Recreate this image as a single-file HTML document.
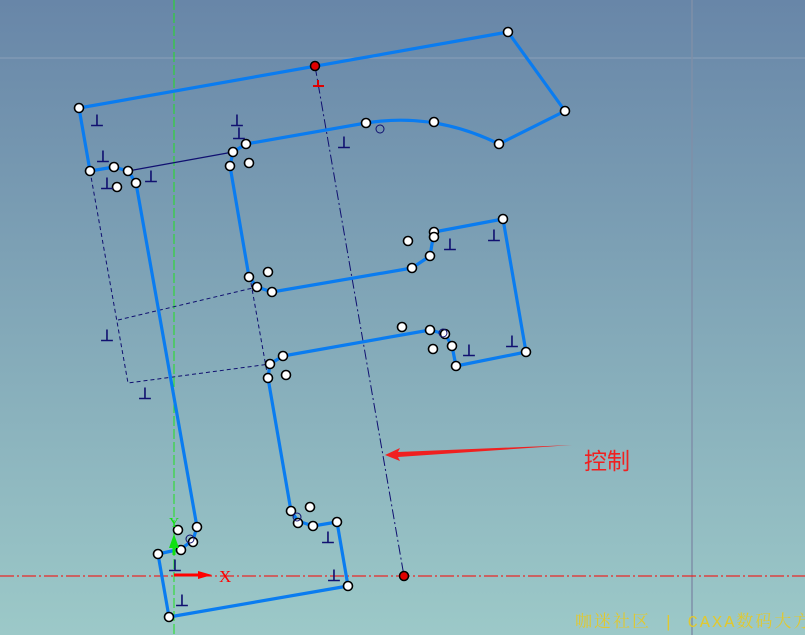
<!DOCTYPE html><html><head><meta charset="utf-8"><style>
html,body{margin:0;padding:0;width:805px;height:635px;overflow:hidden}
body{background:linear-gradient(#6886a8,#9cc9c8)}
svg{position:absolute;left:0;top:0}
</style></head><body>
<svg width="805" height="635" viewBox="0 0 805 635" font-family="Liberation Serif, serif">
<line x1="0" y1="58" x2="805" y2="58" stroke="#8aa0b8" stroke-width="1"/>
<line x1="692" y1="0" x2="692" y2="635" stroke="#7f8fa8" stroke-width="1.5"/>
<line x1="174" y1="0" x2="174" y2="635" stroke="#20e020" stroke-width="1" stroke-dasharray="10,3"/>
<line x1="0" y1="576" x2="805" y2="576" stroke="#ff0000" stroke-width="1" stroke-dasharray="14,3,2,3"/>
<line x1="315" y1="66" x2="404" y2="576" stroke="#101070" stroke-width="1" stroke-dasharray="10,3,2,3"/>
<g stroke="#101070" stroke-width="1" fill="none" stroke-dasharray="4,3">
<polyline points="90,171 128,383 270,364"/>
<line x1="118" y1="320" x2="257" y2="287"/>
<line x1="230" y1="166" x2="268" y2="378"/>
<line x1="246" y1="144" x2="366" y2="123"/>
</g>
<line x1="128" y1="171" x2="233" y2="152" stroke="#101070" stroke-width="1.2"/>
<g stroke="#0a7cf0" stroke-width="3.2" fill="none" stroke-linejoin="round">
<polyline points="366,123 246,144 233,152 230,166 249,277 257,287 272,292 412,268 430,256 434,232 503,219 526,352 456,366 452,346 445,334 430,330 283,356 270,364 268,378 291,511 298,521 313,526 337,522 348,586 169,617 158,554 181,549 193,540 197,527 136,183 128,171 114,167 90,171 79,108 508,32 565,111 499,144"/>
<path d="M499,144 Q434,112 366,123"/>
</g>
<g fill="#fff" stroke="#000" stroke-width="1.6">
<circle cx="79" cy="108" r="4.5"/><circle cx="508" cy="32" r="4.5"/><circle cx="565" cy="111" r="4.5"/><circle cx="499" cy="144" r="4.5"/><circle cx="434" cy="122" r="4.5"/><circle cx="366" cy="123" r="4.5"/><circle cx="246" cy="144" r="4.5"/><circle cx="233" cy="152" r="4.5"/><circle cx="230" cy="166" r="4.5"/><circle cx="249" cy="163" r="4.5"/><circle cx="90" cy="171" r="4.5"/><circle cx="114" cy="167" r="4.5"/><circle cx="128" cy="171" r="4.5"/><circle cx="117" cy="187" r="4.5"/><circle cx="136" cy="183" r="4.5"/><circle cx="249" cy="277" r="4.5"/><circle cx="268" cy="272" r="4.5"/><circle cx="257" cy="287" r="4.5"/><circle cx="272" cy="292" r="4.5"/><circle cx="412" cy="268" r="4.5"/><circle cx="430" cy="256" r="4.5"/><circle cx="434" cy="232" r="4.5"/><circle cx="434" cy="237" r="4.5"/><circle cx="408" cy="241" r="4.5"/><circle cx="503" cy="219" r="4.5"/><circle cx="526" cy="352" r="4.5"/><circle cx="456" cy="366" r="4.5"/><circle cx="452" cy="346" r="4.5"/><circle cx="433" cy="349" r="4.5"/><circle cx="445" cy="334" r="4.5"/><circle cx="430" cy="330" r="4.5"/><circle cx="402" cy="327" r="4.5"/><circle cx="283" cy="356" r="4.5"/><circle cx="270" cy="364" r="4.5"/><circle cx="268" cy="378" r="4.5"/><circle cx="286" cy="375" r="4.5"/><circle cx="291" cy="511" r="4.5"/><circle cx="310" cy="507" r="4.5"/><circle cx="298" cy="523" r="4.5"/><circle cx="313" cy="526" r="4.5"/><circle cx="337" cy="522" r="4.5"/><circle cx="348" cy="586" r="4.5"/><circle cx="169" cy="617" r="4.5"/><circle cx="158" cy="554" r="4.5"/><circle cx="181" cy="550" r="4.5"/><circle cx="193" cy="542" r="4.5"/><circle cx="197" cy="527" r="4.5"/><circle cx="178" cy="530" r="4.5"/>
</g>
<circle cx="315" cy="66" r="4.5" fill="#e00000" stroke="#000" stroke-width="1.5"/>
<circle cx="404" cy="576" r="4.5" fill="#e00000" stroke="#000" stroke-width="1.5"/>
<line x1="313" y1="86" x2="324" y2="86" stroke="#e00000" stroke-width="2"/>
<line x1="318" y1="80" x2="318" y2="86" stroke="#e00000" stroke-width="2"/>
<g fill="#101070" font-size="16" font-family="Liberation Sans, sans-serif" font-weight="bold">
<text x="90" y="126">⊥</text><text x="230" y="126">⊥</text><text x="232" y="139">⊥</text><text x="96" y="162">⊥</text><text x="100" y="189">⊥</text><text x="144" y="182">⊥</text><text x="337" y="148">⊥</text><text x="443" y="250">⊥</text><text x="487" y="241">⊥</text><text x="100" y="341">⊥</text><text x="505" y="347">⊥</text><text x="462" y="356">⊥</text><text x="138" y="399">⊥</text><text x="321" y="543">⊥</text><text x="168" y="571">⊥</text><text x="327" y="581">⊥</text><text x="175" y="606">⊥</text>
</g>
<g fill="none" stroke="#101070" stroke-width="1">
<circle cx="380" cy="129" r="4"/><circle cx="190" cy="539" r="4"/><circle cx="297" cy="517" r="4"/><circle cx="443" cy="333" r="4"/>
</g>
<line x1="174" y1="555" x2="174" y2="538" stroke="#10e010" stroke-width="3"/>
<polygon points="169,548 174,534 179,548" fill="#10e010"/>
<text x="169" y="527" fill="#10e010" font-size="14">Y</text>
<line x1="174" y1="575" x2="200" y2="575" stroke="#ff0000" stroke-width="3"/>
<polygon points="198,571 212,575 198,579" fill="#ff0000"/>
<text x="219" y="582" fill="#ff0000" font-size="17">X</text>
<polygon points="572,445 398,452 400,448 385,455 400,461 398,457" fill="#f02020"/>
<text x="584" y="469" fill="#f02020" font-size="23" font-family="Liberation Sans, Noto Sans CJK SC, sans-serif">控制</text>
<text x="575" y="627" fill="#e0c830" font-size="17" font-family="Liberation Mono, Noto Serif CJK SC, monospace" letter-spacing="2">咖迷社区 | CAXA数码大方</text>
</svg>
</body></html>
